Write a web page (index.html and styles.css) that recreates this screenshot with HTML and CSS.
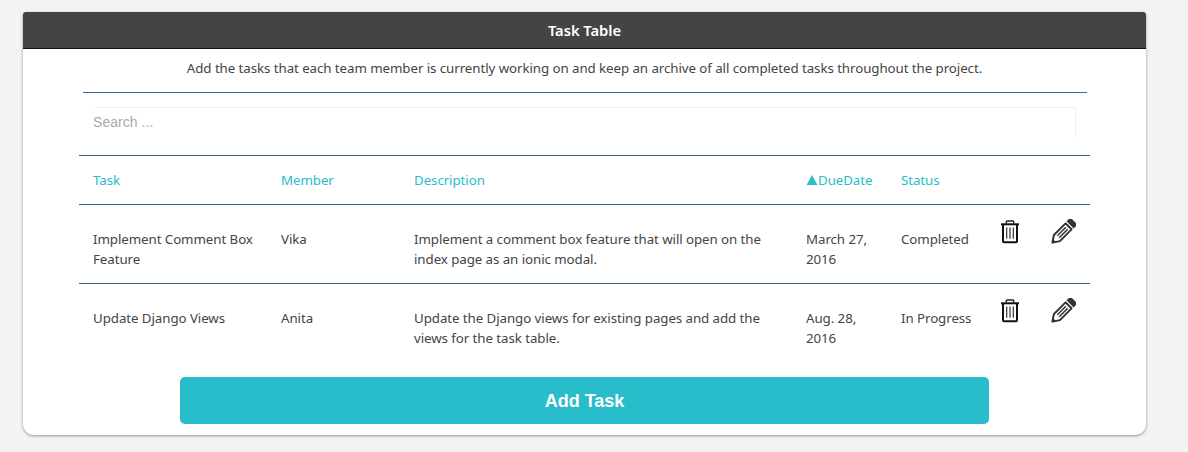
FILE: index.html
```html
<!DOCTYPE html>
<html lang="en">
<head>
<meta charset="utf-8">
<title>Task Table</title>
<link rel="stylesheet" href="styles.css">
</head>
<body>
<svg class="symbols" aria-hidden="true">
  <symbol id="trash" viewBox="0 0 20 24">
    <path d="M6.3 3.4V1.9Q6.3 1.1 7.1 1.1H12.9Q13.7 1.1 13.7 1.9V3.4" fill="none" stroke="#222" stroke-width="1.5"/>
    <path d="M1 4.3H19" stroke="#111" stroke-width="2"/>
    <path d="M3 5V21.2Q3 22.2 4 22.2H16Q17 22.2 17 21.2V5" fill="none" stroke="#111" stroke-width="2"/>
    <path d="M6.7 7.6V18.8M10 7.6V18.8M13.3 7.6V18.8" stroke="#333" stroke-width="1.2"/>
  </symbol>
  <symbol id="pencil" viewBox="0 0 26 26">
    <g transform="translate(.5 25.5) rotate(-45)" fill="none" stroke="#333">
      <path d="M1.3 0L8 -4.4H25.5M1.3 0L8 4.4H25.5M25.2 -5V5" stroke-width="2"/>
      <path d="M10 -1.4H22.5M10 1.4H22.5" stroke-width="1.6"/>
      <path d="M0 0L4.5 -3V3Z" fill="#333" stroke="none"/>
      <path d="M27.4 -5.2H30.8Q33 -5.2 33 -3V3Q33 5.2 30.8 5.2H27.4Z" fill="#333" stroke="none"/>
    </g>
  </symbol>
</svg>
<main class="card">
  <h1 class="card-title">Task Table</h1>
  <p class="intro">Add the tasks that each team member is currently working on and keep an archive of all completed tasks throughout the project.</p>
  <div class="search"><input class="search-input" type="text" placeholder="Search ..."></div>
  <div class="table">
    <div class="row head">
      <span>Task</span><span>Member</span><span>Description</span>
      <span><svg class="arrow" viewBox="0 0 12 11"><path d="M6 0L12 11H0Z"/></svg>DueDate</span><span>Status</span>
    </div>
    <div class="row">
      <span>Implement Comment Box<br>Feature</span><span>Vika</span>
      <span>Implement a comment box feature that will open on the<br>index page as an ionic modal.</span>
      <span>March 27,<br>2016</span><span>Completed</span>
      <svg class="trash"><use href="#trash"/></svg><svg class="pencil"><use href="#pencil"/></svg>
    </div>
    <div class="row">
      <span>Update Django Views</span><span>Anita</span>
      <span>Update the Django views for existing pages and add the<br>views for the task table.</span>
      <span>Aug. 28,<br>2016</span><span>In Progress</span>
      <svg class="trash"><use href="#trash"/></svg><svg class="pencil"><use href="#pencil"/></svg>
    </div>
  </div>
  <button class="add">Add Task</button>
</main>
</body>
</html>
```
FILE: styles.css
```css
* { box-sizing: border-box; }
body {
  margin: 0;
  padding: 12px 42px 17px 23px;
  background: #f3f3f3;
  color: #444;
  font: 13.3px/20px "Noto Sans", "Open Sans", sans-serif;
  letter-spacing: -.065px;
}
.symbols { display: none; }
.card {
  height: 423px;
  display: flex;
  flex-direction: column;
  background: #fff;
  border-radius: 3px 3px 11px 11px;
  box-shadow: 0 1px 3px rgba(0, 0, 0, .4);
}
.card-title {
  margin: 0;
  height: 37px;
  background: #444;
  border-bottom: 1px solid #111;
  border-radius: 3px 3px 0 0;
  color: #fff;
  font-size: 14.8px;
  font-weight: 600;
  line-height: 37px;
  text-align: center;
}
.intro {
  margin: 0;
  height: 43px;
  padding-top: 9px;
  text-align: center;
  white-space: nowrap;
}
.search {
  height: 63px;
  margin: 0 59px 0 60px;
  padding: 14px 11px 0 10px;
  border-top: 1px solid #41678a;
}
.search-input {
  display: block;
  width: 100%;
  height: 30px;
  padding: 0 0 2px;
  border: 1px solid #f0f0f0;
  border-left: 0;
  border-bottom: 0;
  border-radius: 3px 3px 0 0;
  background: #fff;
  font: 14px "Liberation Sans", Arial, sans-serif;
  letter-spacing: .05px;
}
.search-input::placeholder { color: #aaa; }
.table { margin: 0 56px; }
.row {
  display: grid;
  grid-template-columns: 188px 133px 392px 95px 99px 51px 1fr;
  height: 79px;
  padding: 24px 0 0 14px;
  border-top: 1px solid #3e5f82;
  white-space: nowrap;
}
.head { height: 49px; padding-top: 14px; color: #29bccb; }
.arrow { width: 12px; height: 10px; fill: #29bccb; }
.trash { width: 20px; height: 24px; margin-top: -9px; }
.pencil { width: 25px; height: 25px; margin-top: -10px; }
.add {
  width: 809px;
  height: 47px;
  margin: 15px 0 0 157px;
  padding: 2px 0 0;
  border: 0;
  border-radius: 5px;
  background: #29bccb;
  color: #fff;
  font: bold 18px "Liberation Sans", Arial, sans-serif;
}
```
